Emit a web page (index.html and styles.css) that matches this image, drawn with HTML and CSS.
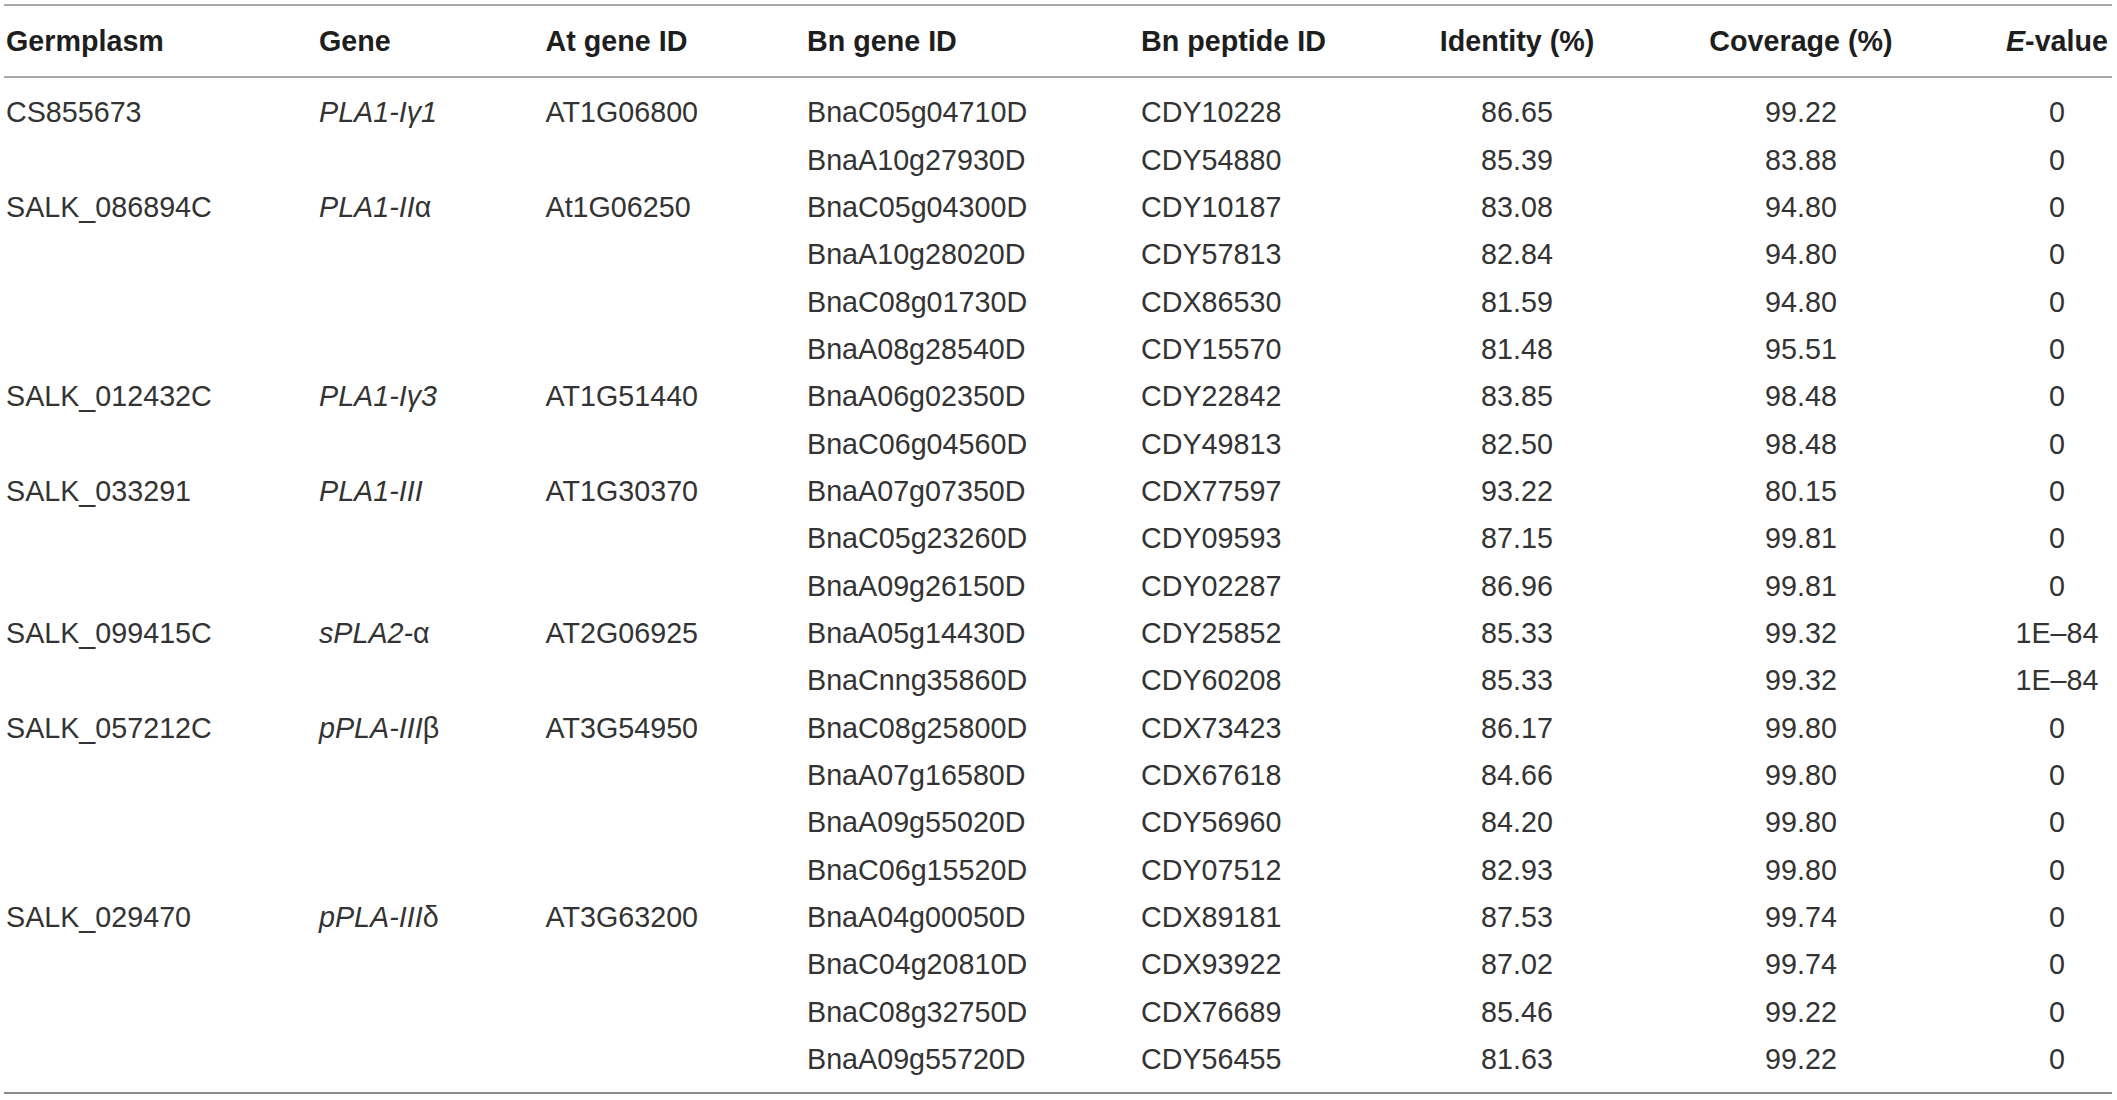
FILE: index.html
```html
<!DOCTYPE html>
<html lang="en">
<head>
<meta charset="utf-8">
<title>Table</title>
<link rel="stylesheet" href="styles.css">
</head>
<body>
<div class="wrap">
<table class="data">
<colgroup>
<col class="c1"><col class="c2"><col class="c3"><col class="c4"><col class="c5"><col class="c6"><col class="c7"><col class="c8">
</colgroup>
<thead>
<tr>
<th class="l">Germplasm</th>
<th class="l">Gene</th>
<th class="l">At gene ID</th>
<th class="l">Bn gene ID</th>
<th class="l">Bn peptide ID</th>
<th class="c">Identity (%)</th>
<th class="c">Coverage (%)</th>
<th class="c"><i>E</i>-value</th>
</tr>
</thead>
<tbody>
<tr class="first"><td class="l">CS855673</td><td class="l"><i>PLA1-Iγ1</i></td><td class="l">AT1G06800</td><td class="l">BnaC05g04710D</td><td class="l">CDY10228</td><td class="c">86.65</td><td class="c">99.22</td><td class="c">0</td></tr>
<tr><td class="l"></td><td class="l"></td><td class="l"></td><td class="l">BnaA10g27930D</td><td class="l">CDY54880</td><td class="c">85.39</td><td class="c">83.88</td><td class="c">0</td></tr>
<tr><td class="l">SALK_086894C</td><td class="l"><i>PLA1-II</i><span class="gr">α</span></td><td class="l">At1G06250</td><td class="l">BnaC05g04300D</td><td class="l">CDY10187</td><td class="c">83.08</td><td class="c">94.80</td><td class="c">0</td></tr>
<tr><td class="l"></td><td class="l"></td><td class="l"></td><td class="l">BnaA10g28020D</td><td class="l">CDY57813</td><td class="c">82.84</td><td class="c">94.80</td><td class="c">0</td></tr>
<tr><td class="l"></td><td class="l"></td><td class="l"></td><td class="l">BnaC08g01730D</td><td class="l">CDX86530</td><td class="c">81.59</td><td class="c">94.80</td><td class="c">0</td></tr>
<tr><td class="l"></td><td class="l"></td><td class="l"></td><td class="l">BnaA08g28540D</td><td class="l">CDY15570</td><td class="c">81.48</td><td class="c">95.51</td><td class="c">0</td></tr>
<tr><td class="l">SALK_012432C</td><td class="l"><i>PLA1-Iγ3</i></td><td class="l">AT1G51440</td><td class="l">BnaA06g02350D</td><td class="l">CDY22842</td><td class="c">83.85</td><td class="c">98.48</td><td class="c">0</td></tr>
<tr><td class="l"></td><td class="l"></td><td class="l"></td><td class="l">BnaC06g04560D</td><td class="l">CDY49813</td><td class="c">82.50</td><td class="c">98.48</td><td class="c">0</td></tr>
<tr><td class="l">SALK_033291</td><td class="l"><i>PLA1-III</i></td><td class="l">AT1G30370</td><td class="l">BnaA07g07350D</td><td class="l">CDX77597</td><td class="c">93.22</td><td class="c">80.15</td><td class="c">0</td></tr>
<tr><td class="l"></td><td class="l"></td><td class="l"></td><td class="l">BnaC05g23260D</td><td class="l">CDY09593</td><td class="c">87.15</td><td class="c">99.81</td><td class="c">0</td></tr>
<tr><td class="l"></td><td class="l"></td><td class="l"></td><td class="l">BnaA09g26150D</td><td class="l">CDY02287</td><td class="c">86.96</td><td class="c">99.81</td><td class="c">0</td></tr>
<tr><td class="l">SALK_099415C</td><td class="l"><i>sPLA2-</i><span class="gr">α</span></td><td class="l">AT2G06925</td><td class="l">BnaA05g14430D</td><td class="l">CDY25852</td><td class="c">85.33</td><td class="c">99.32</td><td class="c">1E–84</td></tr>
<tr><td class="l"></td><td class="l"></td><td class="l"></td><td class="l">BnaCnng35860D</td><td class="l">CDY60208</td><td class="c">85.33</td><td class="c">99.32</td><td class="c">1E–84</td></tr>
<tr><td class="l">SALK_057212C</td><td class="l"><i>pPLA-III</i><span class="gr">β</span></td><td class="l">AT3G54950</td><td class="l">BnaC08g25800D</td><td class="l">CDX73423</td><td class="c">86.17</td><td class="c">99.80</td><td class="c">0</td></tr>
<tr><td class="l"></td><td class="l"></td><td class="l"></td><td class="l">BnaA07g16580D</td><td class="l">CDX67618</td><td class="c">84.66</td><td class="c">99.80</td><td class="c">0</td></tr>
<tr><td class="l"></td><td class="l"></td><td class="l"></td><td class="l">BnaA09g55020D</td><td class="l">CDY56960</td><td class="c">84.20</td><td class="c">99.80</td><td class="c">0</td></tr>
<tr><td class="l"></td><td class="l"></td><td class="l"></td><td class="l">BnaC06g15520D</td><td class="l">CDY07512</td><td class="c">82.93</td><td class="c">99.80</td><td class="c">0</td></tr>
<tr><td class="l">SALK_029470</td><td class="l"><i>pPLA-III</i><span class="gr">δ</span></td><td class="l">AT3G63200</td><td class="l">BnaA04g00050D</td><td class="l">CDX89181</td><td class="c">87.53</td><td class="c">99.74</td><td class="c">0</td></tr>
<tr><td class="l"></td><td class="l"></td><td class="l"></td><td class="l">BnaC04g20810D</td><td class="l">CDX93922</td><td class="c">87.02</td><td class="c">99.74</td><td class="c">0</td></tr>
<tr><td class="l"></td><td class="l"></td><td class="l"></td><td class="l">BnaC08g32750D</td><td class="l">CDX76689</td><td class="c">85.46</td><td class="c">99.22</td><td class="c">0</td></tr>
<tr class="last"><td class="l"></td><td class="l"></td><td class="l"></td><td class="l">BnaA09g55720D</td><td class="l">CDY56455</td><td class="c">81.63</td><td class="c">99.22</td><td class="c">0</td></tr>
</tbody>
</table>
</div>
</body>
</html>
```

FILE: styles.css
```css
html, body {
  margin: 0;
  padding: 0;
  background: #ffffff;
}

.wrap {
  padding: 4px 0 0 4px;
}

.data {
  width: 2108px;
  table-layout: fixed;
  border-collapse: separate;
  border-spacing: 0;
  font-family: "Liberation Sans", Arial, Helvetica, sans-serif;
  font-size: 28.7px;
  color: #333333;
}

.c1 { width: 313px; }
.c2 { width: 226.5px; }
.c3 { width: 261.5px; }
.c4 { width: 334px; }
.c5 { width: 295px; }
.c6 { width: 166px; }
.c7 { width: 402px; }
.c8 { width: 110px; }

.data th {
  font-weight: bold;
  color: #1e1e1e;
  line-height: 70px;
  padding: 0;
  border-top: 2px solid #a9a9a9;
  border-bottom: 2px solid #a9a9a9;
  white-space: nowrap;
  vertical-align: middle;
}

.data td {
  font-weight: normal;
  line-height: 47.33px;
  padding: 0;
  white-space: nowrap;
  vertical-align: middle;
}

.data .l {
  text-align: left;
  padding-left: 2px;
}

.data .c {
  text-align: center;
}

.gr {
  font-style: normal;
}

.data tr.first td {
  padding-top: 11.3px;
}

.data tr.last td {
  padding-bottom: 8.8px;
  border-bottom: 2px solid #8c8c8c;
}
```
